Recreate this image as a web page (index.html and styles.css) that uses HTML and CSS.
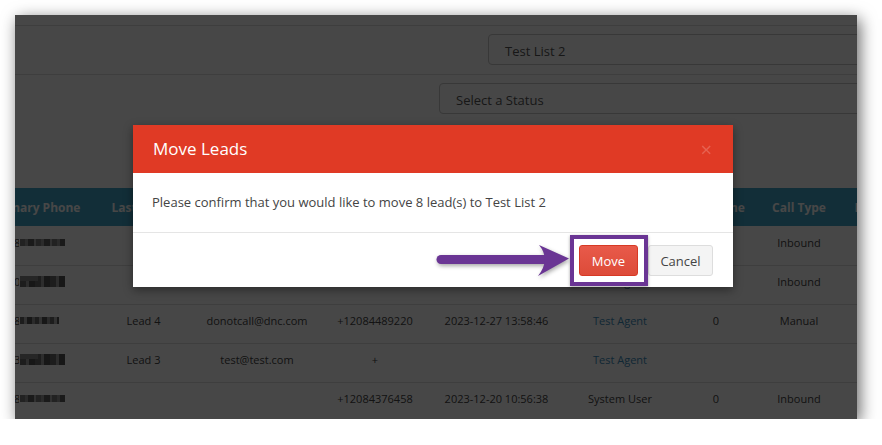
FILE: index.html
```html
<!DOCTYPE html>
<html>
<head>
<meta charset="utf-8">
<title>Move Leads</title>
<link rel="stylesheet" href="styles.css">
</head>
<body>
<div class="shot">
  <div class="page">
    <div class="topbar"></div>
    <div class="form-row row-list"><div class="input input-list">Test List 2</div></div>
    <div class="form-row row-status"><div class="input input-status">Select a Status</div></div>
    <div class="table">
      <div class="tr th">
        <div class="c c1">Primary Phone</div><div class="c">Last Name</div><div class="c">Email</div><div class="c">Phone</div><div class="c">Last Call</div><div class="c">Agent</div><div class="c">Talk Time</div><div class="c">Call Type</div><div class="c">Follow Up</div>
      </div>
      <div class="tr row">
        <div class="c c1"><span class="dig">8</span><span class="blur b1"></span></div><div class="c"></div><div class="c">lead8@test.com</div><div class="c">+12085550118</div><div class="c">2023-12-28 09:12:04</div><div class="c link">Test Agent</div><div class="c">0</div><div class="c">Inbound</div><div class="c"></div>
      </div>
      <div class="tr row">
        <div class="c c1"><span class="dig">0</span><span class="blur b2"></span></div><div class="c"></div><div class="c">lead5@test.com</div><div class="c">+12085550105</div><div class="c">2023-12-27 14:02:11</div><div class="c link">Test Agent</div><div class="c">0</div><div class="c">Inbound</div><div class="c"></div>
      </div>
      <div class="tr row">
        <div class="c c1"><span class="dig">8</span><span class="blur b3"></span></div><div class="c">Lead 4</div><div class="c">donotcall@dnc.com</div><div class="c">+12084489220</div><div class="c">2023-12-27 13:58:46</div><div class="c link">Test Agent</div><div class="c">0</div><div class="c">Manual</div><div class="c"></div>
      </div>
      <div class="tr row">
        <div class="c c1"><span class="dig">3</span><span class="blur b2"></span></div><div class="c">Lead 3</div><div class="c">test@test.com</div><div class="c">+</div><div class="c"></div><div class="c link">Test Agent</div><div class="c"></div><div class="c"></div><div class="c"></div>
      </div>
      <div class="tr row">
        <div class="c c1"><span class="dig">8</span><span class="blur b1"></span></div><div class="c"></div><div class="c"></div><div class="c">+12084376458</div><div class="c">2023-12-20 10:56:38</div><div class="c">System User</div><div class="c">0</div><div class="c">Inbound</div><div class="c"></div>
      </div>
    </div>
  </div>

  <div class="backdrop"></div>

  <div class="modal">
    <div class="modal-header">
      <span class="modal-title">Move Leads</span>
      <span class="close">&times;</span>
    </div>
    <div class="modal-body">Please confirm that you would like to move 8 lead(s) to Test List 2</div>
    <div class="modal-footer">
      <button class="btn btn-move">Move</button>
      <button class="btn btn-cancel">Cancel</button>
    </div>
  </div>

  <svg class="arrow" width="140" height="50" viewBox="435 240 140 50">
    <line x1="441" y1="259.5" x2="546" y2="259.5" stroke="#6a3594" stroke-width="9" stroke-linecap="round"/>
    <path d="M539,245 L569,258.5 L538,276 Q551,259.5 539,245 Z" fill="#6a3594"/>
  </svg>
  <div class="highlight"></div>
</div>
</body>
</html>
```

FILE: styles.css
```css
html, body {
  margin: 0;
  padding: 0;
  background: #fff;
}

body {
  font-family: "Open Sans", "Liberation Sans", sans-serif;
}

.shot {
  position: relative;
  margin: 15px 0 0 15px;
  width: 842px;
  height: 404px;
  overflow: hidden;
  background: #fff;
  box-shadow: 3px 4px 15px rgba(0, 0, 0, 0.6);
}

.page {
  width: 842px;
}

.topbar {
  height: 10px;
  border-bottom: 1px solid #ddd;
}

.form-row {
  box-sizing: border-box;
  padding-top: 8px;
}

.row-list {
  height: 49px;
  border-bottom: 1px solid #ddd;
  padding-left: 473px;
}

.row-status {
  height: 113px;
  padding-left: 424px;
}

.input {
  box-sizing: border-box;
  height: 31px;
  width: 520px;
  border: 1px solid #c8c8c8;
  border-radius: 4px;
  padding: 2px 16px 0;
  font-size: 13px;
  line-height: 29px;
  color: #555;
}

.table {
  margin-left: -39px;
  width: 1000px;
}

.tr {
  display: grid;
  grid-template-columns: 120px 95px 132px 104px 139px 108px 84px 82px 88px;
}

.th {
  height: 38px;
  background: #40a5c8;
  color: #fff;
  font-weight: 700;
  font-size: 12px;
}

.row {
  box-sizing: border-box;
  height: 39px;
  padding-bottom: 6px;
  font-size: 11px;
  color: #444;
}

.row + .row {
  border-top: 1px solid #ddd;
  padding-bottom: 7px;
}

.c {
  display: flex;
  align-items: center;
  justify-content: center;
  white-space: nowrap;
}

.row .c1 {
  justify-content: flex-start;
  padding-left: 38px;
}

.dig {
  width: 5px;
  overflow: hidden;
  margin-right: 1px;
}

.blur {
  display: inline-block;
  width: 45px;
  height: 7px;
  background: repeating-linear-gradient(90deg, #7a7a7a 0 5px, #9a9a9a 5px 8px, #5e5e5e 8px 14px, #b0b0b0 14px 16px);
}

.b2 {
  height: 11px;
  background:
    linear-gradient(90deg, #8a8a8a 0 18px, transparent 18px) top left / 100% 5px no-repeat,
    repeating-linear-gradient(90deg, #6a6a6a 0 6px, #a0a0a0 6px 9px, #555 9px 15px);
}

.b3 {
  width: 39px;
  background: repeating-linear-gradient(90deg, #6a6a6a 0 4px, #b5b5b5 4px 7px, #555 7px 12px, #9a9a9a 12px 15px);
}

.link {
  color: #3c8dbc;
}

.backdrop {
  position: absolute;
  inset: 0;
  background: rgba(0, 0, 0, 0.72);
}

.modal {
  position: absolute;
  left: 118px;
  top: 110px;
  width: 600px;
  background: #fff;
  box-shadow: 0 3px 9px rgba(0, 0, 0, 0.4);
}

.modal-header {
  box-sizing: border-box;
  height: 48px;
  padding: 0 20px;
  background: #e03a25;
  display: flex;
  align-items: center;
  justify-content: space-between;
}

.modal-title {
  color: #fff;
  font-size: 17px;
  line-height: 24px;
}

.close {
  color: #fff;
  opacity: 0.2;
  font-size: 20px;
  line-height: 20px;
  font-weight: 400;
  margin-right: 1px;
  margin-top: 2px;
}

.modal-body {
  box-sizing: border-box;
  height: 60px;
  padding: 20px 19px;
  border-bottom: 1px solid #e5e5e5;
  font-size: 13px;
  line-height: 19px;
  color: #444;
}

.modal-footer {
  box-sizing: border-box;
  height: 54px;
  padding: 12px 20px 11px;
  display: flex;
  justify-content: flex-end;
  gap: 10px;
}

.btn {
  box-sizing: border-box;
  height: 31px;
  border-radius: 3px;
  font-family: "Open Sans", "Liberation Sans", sans-serif;
  font-size: 13px;
  padding: 0;
  margin: 0;
}

.btn-move {
  width: 59px;
  color: #fff;
  background: linear-gradient(#e85a4a, #dd4b39);
  border: 1px solid #d73925;
}

.btn-cancel {
  width: 65px;
  color: #444;
  background: #f4f4f4;
  border: 1px solid #ddd;
}

.arrow {
  position: absolute;
  left: 420px;
  top: 225px;
  filter: drop-shadow(1px 2px 2px rgba(0, 0, 0, 0.35));
}

.highlight {
  position: absolute;
  left: 555px;
  top: 220px;
  width: 78px;
  height: 51px;
  box-sizing: border-box;
  border: 4px solid #6a3594;
  box-shadow: 0 1px 3px rgba(0, 0, 0, 0.35);
}
```
